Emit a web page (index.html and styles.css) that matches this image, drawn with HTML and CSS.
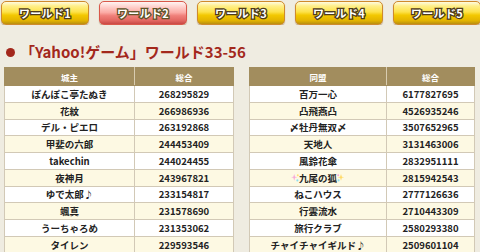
FILE: index.html
```html
<!DOCTYPE html>
<html lang="ja">
<head>
<meta charset="utf-8">
<link rel="stylesheet" href="styles.css">
</head>
<body>
<nav class="worlds">
  <a class="wbtn">ワールド1</a>
  <a class="wbtn active">ワールド2</a>
  <a class="wbtn">ワールド3</a>
  <a class="wbtn">ワールド4</a>
  <a class="wbtn">ワールド5</a>
</nav>
<h2 class="title"><span class="dot"></span>「Yahoo!ゲーム」ワールド33-56</h2>
<div class="tables">
  <table class="rank left">
    <tr><th>城主</th><th>総合</th></tr>
    <tr><td>ぽんぽこ亭たぬき</td><td>268295829</td></tr>
    <tr><td>花紋</td><td>266986936</td></tr>
    <tr><td>デル・ピエロ</td><td>263192868</td></tr>
    <tr><td>甲斐の六郎</td><td>244453409</td></tr>
    <tr><td>takechin</td><td>244024455</td></tr>
    <tr><td>夜神月</td><td>243967821</td></tr>
    <tr><td>ゆで太郎♪</td><td>233154817</td></tr>
    <tr><td>颯真</td><td>231578690</td></tr>
    <tr><td>うーちゃろめ</td><td>231353062</td></tr>
    <tr><td>タイレン</td><td>229593546</td></tr>
  </table>
  <table class="rank right">
    <tr><th>同盟</th><th>総合</th></tr>
    <tr><td>百万一心</td><td>6177827695</td></tr>
    <tr><td>凸飛燕凸</td><td>4526935246</td></tr>
    <tr><td>〆牡丹無双〆</td><td>3507652965</td></tr>
    <tr><td>天地人</td><td>3131463006</td></tr>
    <tr><td>風鈴花傘</td><td>2832951111</td></tr>
    <tr><td><svg class="spark" viewBox="0 0 10 10"><path d="M4 0 L5 3.5 L8 4 L5 4.8 L4 8.5 L3 4.8 L0 4 L3 3.5 Z" fill="#f6a8d8"/><circle cx="8.5" cy="1.5" r="1.2" fill="#ffe070"/><circle cx="8" cy="8" r="1.3" fill="#8ee0f0"/></svg>九尾の狐<svg class="spark" viewBox="0 0 10 10"><path d="M5 0 L6 3.5 L9 4 L6 4.8 L5 8.5 L4 4.8 L1 4 L4 3.5 Z" fill="#ffd860"/><circle cx="1.5" cy="1.5" r="1.2" fill="#f6a8d8"/><circle cx="2" cy="8" r="1.3" fill="#8ee0f0"/></svg></td><td>2815942543</td></tr>
    <tr><td>ねこハウス</td><td>2777126636</td></tr>
    <tr><td>行雲流水</td><td>2710443309</td></tr>
    <tr><td>旅行クラブ</td><td>2580293380</td></tr>
    <tr><td>チャイチャイギルド♪</td><td>2509601104</td></tr>
  </table>
</div>
</body>
</html>
```
FILE: styles.css
```css
html, body {
  margin: 0;
  padding: 0;
  background: #efece1;
  font-family: "Noto Sans CJK JP", "Noto Sans", sans-serif;
}
.worlds {
  display: flex;
  gap: 10px;
  padding: 1px 0 0 1px;
  overflow: hidden;
  white-space: nowrap;
}
.wbtn {
  flex: 0 0 auto;
  box-sizing: border-box;
  width: 88px;
  height: 24px;
  border: 1px solid #cf8a2c;
  border-radius: 5px;
  background: linear-gradient(#fffbe0 0%, #ffef8a 18%, #fde24a 45%, #f3c800 60%, #e2b300 85%, #b98e10 100%);
  box-shadow: 0 1px 1px rgba(120, 80, 20, 0.45);
  display: flex;
  align-items: center;
  justify-content: center;
  font-size: 11px;
  font-weight: 700;
  color: #fff;
  -webkit-text-stroke: 2.6px #4d3b1c;
  paint-order: stroke fill;
  letter-spacing: 0.3px;
  line-height: 1;
}
.wbtn.active {
  border-color: #d9584a;
  background: linear-gradient(#fff4f2 0%, #ffd4d0 20%, #fbaaa4 48%, #f0807a 62%, #e26660 85%, #c84844 100%);
  -webkit-text-stroke-color: #5e5228;
}
.title {
  margin: 17px 0 0 6px;
  display: flex;
  align-items: center;
  gap: 3px;
  font-size: 15px;
  font-weight: 700;
  color: #a3281c;
  line-height: 20px;
  height: 20px;
}
.dot {
  width: 9px;
  height: 9px;
  border-radius: 50%;
  background: #a3281c;
  margin-right: 2px;
}
.tables {
  display: flex;
  gap: 15px;
  padding: 5px 0 0 4px;
}
.rank {
  border-collapse: collapse;
  font-size: 9.5px;
  font-weight: 700;
  color: #222;
  table-layout: fixed;
}
.rank.left { width: 230px; }
.rank.right { width: 226px; }
.rank.left th:first-child { width: 129px; }
.rank.right th:first-child { width: 136px; }
.rank tr { height: 16.75px; }
.rank th {
  background: #a28d5e;
  color: #fff;
  font-size: 8.5px;
  font-weight: 700;
  height: 17px;
  padding: 0;
  border: 1px solid #a28d5e;
  border-right-color: #d8ccb0;
}
.rank th:last-child { border-right-color: #a28d5e; }
.rank td {
  padding: 0;
  text-align: center;
  border: 1px solid #d2c9b6;
  background: #fff;
  line-height: 14px;
  white-space: nowrap;
}
.rank tr:nth-child(odd) td { background: #fdf9e3; }
.spark {
  width: 8px;
  height: 8px;
  vertical-align: 0;
}
```
